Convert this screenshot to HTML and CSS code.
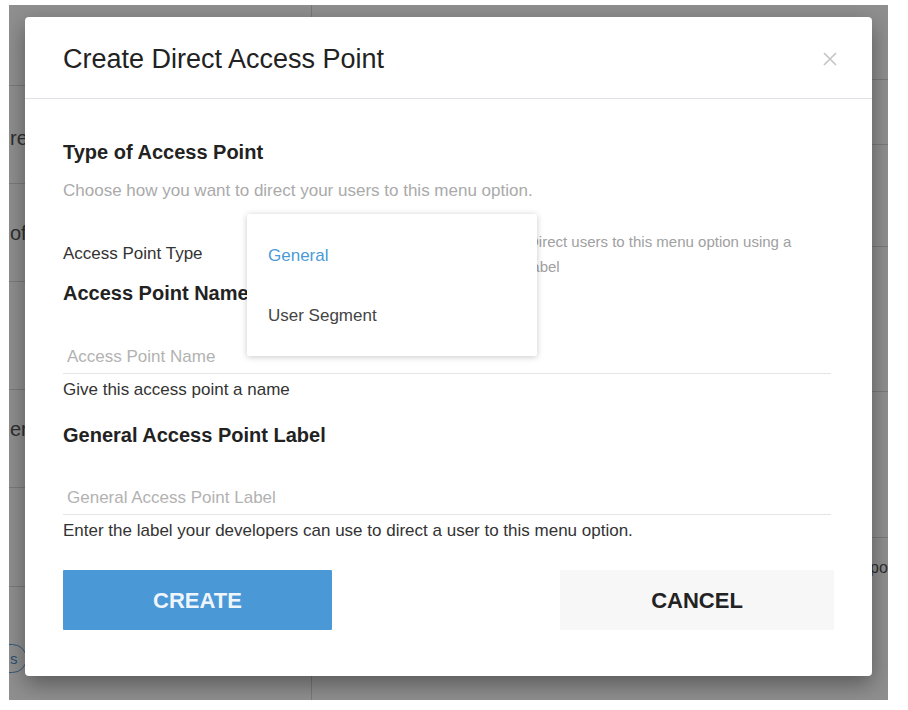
FILE: index.html
```html
<!DOCTYPE html>
<html lang="en">
<head>
<meta charset="utf-8">
<title>Create Direct Access Point</title>
<link rel="stylesheet" href="styles.css">
</head>
<body>
<div class="screen">
  <div class="page">
    <div class="col-left">
      <div class="lrow lrow-1"></div>
      <div class="lrow lrow-2"><span class="ltext">rewards</span></div>
      <div class="lrow lrow-3"><span class="ltext">offers</span></div>
      <div class="lrow lrow-4"></div>
      <div class="lrow lrow-5"><span class="ltext">ers list</span></div>
      <div class="lrow lrow-6"></div>
      <div class="lrow lrow-7"><span class="pill">s</span></div>
    </div>
    <div class="col-right">
      <div class="rrow rrow-1"></div>
      <div class="rrow rrow-2"></div>
      <div class="rrow rrow-3"></div>
      <div class="rrow rrow-4"></div>
      <div class="rrow rrow-5"></div>
      <div class="rrow rrow-6"><span class="rtext">po</span></div>
    </div>
  </div>
  <div class="overlay"></div>

  <div class="modal">
    <div class="modal-header">
      <h1 class="modal-title">Create Direct Access Point</h1>
      <button class="close" aria-label="Close">
        <svg width="16" height="16" viewBox="0 0 16 16"><path d="M2 2 L14 14 M14 2 L2 14" stroke="#c4c4c4" stroke-width="1.6" fill="none"/></svg>
      </button>
    </div>
    <div class="modal-body">
      <h2 class="section-title first">Type of Access Point</h2>
      <p class="muted">Choose how you want to direct your users to this menu option.</p>

      <div class="type-row">
        <div class="type-label">Access Point Type</div>
        <div class="type-select">
          <ul class="menu">
            <li class="menu-item active">General</li>
            <li class="menu-item">User Segment</li>
          </ul>
        </div>
        <div class="type-help">Direct users to this menu option using a label</div>
      </div>

      <h2 class="section-title name-title">Access Point Name</h2>
      <div class="field"><span class="placeholder">Access Point Name</span></div>
      <p class="hint">Give this access point a name</p>

      <h2 class="section-title label-title">General Access Point Label</h2>
      <div class="field"><span class="placeholder">General Access Point Label</span></div>
      <p class="hint">Enter the label your developers can use to direct a user to this menu option.</p>

      <div class="actions">
        <button class="btn btn-primary">CREATE</button>
        <button class="btn btn-secondary">CANCEL</button>
      </div>
    </div>
  </div>
</div>
</body>
</html>
```

FILE: styles.css
```css
* { box-sizing: border-box; }

html, body {
  margin: 0;
  padding: 0;
  background: #ffffff;
  font-family: "Liberation Sans", Arial, Helvetica, sans-serif;
}

.screen {
  position: relative;
  width: 879px;
  height: 695px;
  margin: 5px 0 0 9px;
  overflow: hidden;
  background: #ffffff;
}

/* underlying page */
.page {
  display: flex;
  height: 100%;
}

.col-left {
  flex: 0 0 303px;
  width: 303px;
  border-right: 1px solid #d6d6d6;
  display: flex;
  flex-direction: column;
}

.lrow {
  border-bottom: 1px solid #dadada;
  display: flex;
  align-items: center;
  flex: 0 0 auto;
}
.lrow-1 { height: 81px; }
.lrow-2 { height: 98px; align-items: flex-start; padding-top: 41px; }
.lrow-3 { height: 98px; align-items: flex-start; padding-top: 38px; }
.lrow-4 { height: 108px; }
.lrow-5 { height: 98px; align-items: flex-start; padding-top: 28px; }
.lrow-6 { height: 99px; }
.lrow-7 { border-bottom: none; height: 112px; align-items: flex-start; padding-top: 57px; }

.ltext {
  font-size: 20px;
  color: #555;
  padding-left: 1px;
  white-space: nowrap;
}

.pill {
  display: inline-block;
  margin-left: -30px;
  height: 29px;
  line-height: 27px;
  padding: 0 8px 0 30px;
  border: 1px solid #5a9fd8;
  border-radius: 15px;
  color: #4a90d0;
  font-size: 15px;
}

.col-right {
  flex: 1 1 auto;
  min-width: 0;
  display: flex;
  flex-direction: column;
}
.rrow { border-bottom: 1px solid #dadada; flex: 0 0 auto; }
.rrow-1 { height: 75px; }
.rrow-2 { height: 65px; }
.rrow-3 { height: 102px; }
.rrow-4 { height: 145px; }
.rrow-5 { height: 146px; }
.rrow-6 { border-bottom: none; padding: 21px 0 0 558px; white-space: nowrap; }
.rtext { font-size: 16px; color: #555; }

.overlay {
  position: absolute;
  inset: 0;
  background: rgba(0, 0, 0, 0.44);
}

/* modal */
.modal {
  position: absolute;
  left: 16px;
  top: 12px;
  width: 847px;
  height: 659px;
  background: #ffffff;
  border-radius: 4px;
  box-shadow: 0 8px 22px rgba(0, 0, 0, 0.38);
}

.modal-header {
  height: 82px;
  border-bottom: 1px solid #e0e0e9;
  display: flex;
  align-items: center;
  justify-content: space-between;
  padding: 2px 34px 0 38px;
}

.modal-title {
  margin: 0;
  font-size: 27px;
  font-weight: normal;
  color: #222;
  line-height: 32px;
}

.close {
  border: none;
  background: transparent;
  padding: 0;
  width: 16px;
  height: 16px;
  display: flex;
}

.modal-body {
  padding: 41px 38px 0 38px;
}

.section-title {
  margin: 0;
  font-size: 20px;
  font-weight: bold;
  color: #222;
  line-height: 24px;
}

.muted {
  margin: 16px 0 0;
  font-size: 17px;
  line-height: 22px;
  color: #aaaaaa;
}

.type-row {
  margin-top: 27px;
  display: flex;
  align-items: center;
  height: 50px;
}

.type-label {
  flex: 0 0 184px;
  font-size: 17px;
  color: #333;
  line-height: 22px;
}

.type-select {
  flex: 0 0 281px;
  align-self: stretch;
  position: relative;
}

.menu {
  position: absolute;
  left: 0;
  top: -15px;
  width: 290px;
  margin: 0;
  padding: 12px 0 10px;
  list-style: none;
  background: #ffffff;
  box-shadow: 0 1px 6px rgba(0, 0, 0, 0.22);
  border-radius: 2px;
  z-index: 2;
}

.menu-item {
  height: 60px;
  line-height: 60px;
  padding-left: 21px;
  font-size: 17px;
  color: #444;
}
.menu-item.active { color: #4a9ad8; }

.type-help {
  flex: 0 0 280px;
  font-size: 15px;
  line-height: 25px;
  color: #a0a0a0;
}

.name-title { margin-top: 2px; }
.label-title { margin-top: 22px; }

.field {
  margin-top: 32px;
  margin-right: 3px;
  height: 37px;
  border-bottom: 1px solid #e4e4e4;
  display: flex;
  align-items: center;
  padding: 3px 0 0 4px;
}
.label-title + .field { margin-top: 31px; }

.placeholder {
  font-size: 17px;
  color: #b2b2b2;
}

.hint {
  margin: 5px 0 0;
  font-size: 17px;
  line-height: 22px;
  color: #333;
}

.actions {
  margin-top: 28px;
  display: flex;
  justify-content: space-between;
}

.btn {
  height: 60px;
  border: none;
  border-radius: 1px;
  font-family: "Liberation Sans", Arial, Helvetica, sans-serif;
  font-size: 22px;
  font-weight: bold;
  cursor: pointer;
  padding: 1px 0 0;
}

.btn-primary {
  width: 269px;
  background: #4b98d7;
  color: rgba(255, 255, 255, 0.92);
}

.btn-secondary {
  width: 274px;
  background: #f7f7f7;
  color: #222;
}
```
